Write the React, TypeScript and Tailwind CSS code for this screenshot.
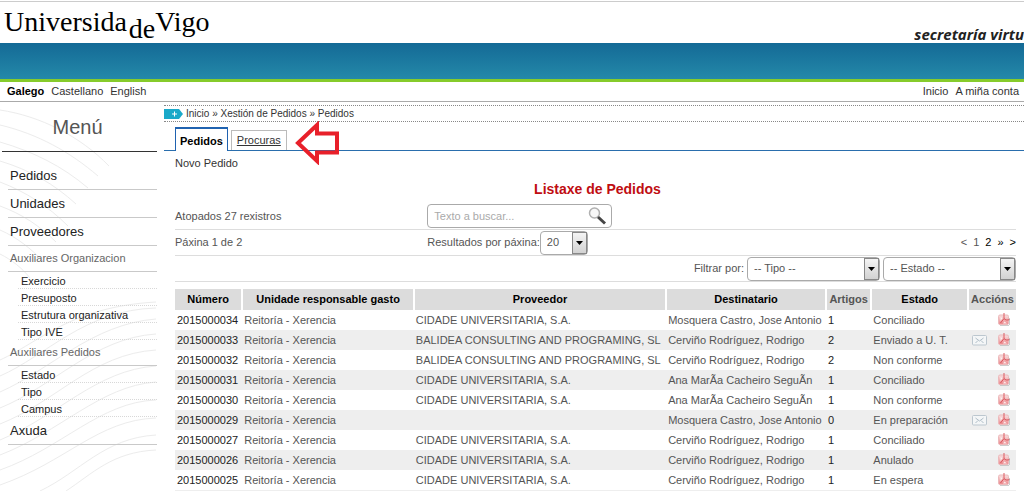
import type { ReactNode } from "react"
import { clsx } from "clsx"

type Pedido = {
  numero: string
  unidade: string
  proveedor: string
  destinatario: string
  artigos: number
  estado: string
  mail?: boolean
}

const CIDADE = "CIDADE UNIVERSITARIA, S.A."
const BALIDEA = "BALIDEA CONSULTING AND PROGRAMING, SL"
const XERENCIA = "Reitoría - Xerencia"

const pedidos: Pedido[] = [
  { numero: "2015000034", unidade: XERENCIA, proveedor: CIDADE, destinatario: "Mosquera Castro, Jose Antonio", artigos: 1, estado: "Conciliado" },
  { numero: "2015000033", unidade: XERENCIA, proveedor: BALIDEA, destinatario: "Cerviño Rodríguez, Rodrigo", artigos: 2, estado: "Enviado a U. T.", mail: true },
  { numero: "2015000032", unidade: XERENCIA, proveedor: BALIDEA, destinatario: "Cerviño Rodríguez, Rodrigo", artigos: 2, estado: "Non conforme" },
  { numero: "2015000031", unidade: XERENCIA, proveedor: CIDADE, destinatario: "Ana MarÃa Cacheiro SeguÃn", artigos: 1, estado: "Conciliado" },
  { numero: "2015000030", unidade: XERENCIA, proveedor: CIDADE, destinatario: "Ana MarÃa Cacheiro SeguÃn", artigos: 1, estado: "Non conforme" },
  { numero: "2015000029", unidade: XERENCIA, proveedor: "", destinatario: "Mosquera Castro, Jose Antonio", artigos: 0, estado: "En preparación", mail: true },
  { numero: "2015000027", unidade: XERENCIA, proveedor: CIDADE, destinatario: "Cerviño Rodríguez, Rodrigo", artigos: 1, estado: "Conciliado" },
  { numero: "2015000026", unidade: XERENCIA, proveedor: CIDADE, destinatario: "Cerviño Rodríguez, Rodrigo", artigos: 1, estado: "Anulado" },
  { numero: "2015000025", unidade: XERENCIA, proveedor: CIDADE, destinatario: "Cerviño Rodríguez, Rodrigo", artigos: 1, estado: "En espera" },
]

function PdfIcon() {
  return (
    <svg width="14" height="14" viewBox="0 0 14 14" aria-hidden="true">
      <defs>
        <linearGradient id="pdf" x1="0" y1="0" x2="0" y2="1">
          <stop offset="0" stopColor="#f8e2e2" />
          <stop offset="1" stopColor="#ec8589" />
        </linearGradient>
      </defs>
      <rect x="1.5" y="2" width="10" height="9.500" rx="1.500" fill="url(#pdf)" stroke="#ecb9bb" />
      <path d="M7 0v5.500" stroke="#dd5a60" />
      <path d="M7 5.500L3.500 10M7 5.500c1 1.500 3 2 6 1" fill="none" stroke="#d9525a" />
      <path d="M3.500 4l2 1-2 3zM7.500 8.500l2.500 2H6z" fill="#fff" opacity=".8" />
      <path d="M3 12.500h9M12.500 5v7" stroke="#b9b9b9" opacity=".7" />
    </svg>
  )
}

function MailIcon() {
  return (
    <svg width="15" height="11" viewBox="0 0 15 11" aria-hidden="true">
      <rect x=".5" y=".5" width="14" height="9.500" rx="1" fill="#f4f6f7" stroke="#bcc7cf" />
      <path d="M3.500 3l4 3 4-3M3.500 8l2.500-2.500M11.500 8L9 5.500" fill="none" stroke="#b0bec8" />
    </svg>
  )
}

/* Faint contour lines behind the menu */
function Waves() {
  return (
    <svg className="pointer-events-none absolute inset-0 h-full w-full" fill="none" stroke="#ececec" aria-hidden="true">
      <path d="M0 8C40 14 80 34 109 64M0 23C38 32 70 50 98 74M0 40C34 50 62 64 88 86M0 59C30 68 54 82 76 102M0 80C26 90 48 104 68 124M0 104C22 112 40 124 56 140M0 128C18 136 30 146 44 160M0 152C12 158 22 166 30 176" />
      <path d="M0 258C40 240 70 205 156 200M0 274C46 254 84 208 156 206M0 290C50 268 92 222 156 217M0 306C54 284 94 236 156 232M0 322C56 300 92 252 156 248M0 338C58 314 96 268 156 264M0 353C60 330 100 284 156 280M0 368C62 346 100 300 156 298M0 383C66 360 98 318 156 316M40 389C80 370 104 336 156 333M66 389C92 372 112 350 156 348" />
    </svg>
  )
}

function MenuItem({ children, className }: { children: ReactNode; className?: string }) {
  return (
    <li className={clsx("ml-1.5 h-7 border-b border-[#c9c9c9] pl-0.5 text-[13px] leading-7 text-[#222]", className)}>
      <a href="#">{children}</a>
    </li>
  )
}

function MenuGroup({ title, items }: { title: string; items: string[] }) {
  return (
    <li>
      <div className="ml-1.5 h-[26px] border-b border-[#c9c9c9] pl-0.5 text-[11px] leading-6 text-[#666]">{title}</div>
      <ul className="ml-4">
        {items.map((item) => (
          <li key={item} className="h-[17px] border-b border-dotted border-[#d8d8d8] pl-[3px] text-[11px] leading-[18px] text-[#222]">
            <a href="#">{item}</a>
          </li>
        ))}
      </ul>
    </li>
  )
}

function Sidebar() {
  return (
    <nav className="relative w-[157px] shrink-0 pl-0.5">
      <Waves />
      <div className="relative">
        <h2 className="h-[50px] border-b border-[#333] pr-1 text-center text-[20px] leading-[50px] text-[#555]">Menú</h2>
        <ul>
          <MenuItem className="mt-2.5">Pedidos</MenuItem>
          <MenuItem>Unidades</MenuItem>
          <MenuItem>Proveedores</MenuItem>
          <MenuGroup title="Auxiliares Organizacion" items={["Exercicio", "Presuposto", "Estrutura organizativa", "Tipo IVE"]} />
          <MenuGroup title="Auxiliares Pedidos" items={["Estado", "Tipo", "Campus"]} />
          <MenuItem>Axuda</MenuItem>
        </ul>
      </div>
    </nav>
  )
}

function Select({ id, label, options, className }: { id: string; label?: string; options: string[]; className: string }) {
  return (
    <span className={clsx("relative inline-flex h-6", className)}>
      <select id={id} aria-label={label} className="w-full appearance-none rounded border border-[#aaa] bg-white pl-1.5 text-[11px] text-[#555]">
        {options.map((option) => (
          <option key={option}>{option}</option>
        ))}
      </select>
      <span className="pointer-events-none absolute inset-y-px right-px flex w-[15px] items-center justify-center border border-[#888] bg-linear-to-b from-[#f4f4f4] to-[#d2d2d2]">
        <svg width="7" height="4" viewBox="0 0 7 4">
          <path d="M0 0h7L3.500 4z" fill="#000" />
        </svg>
      </span>
    </span>
  )
}

function Th({ children, muted }: { children: ReactNode; muted?: boolean }) {
  return (
    <th className={clsx("border-r-2 border-white p-0 text-center font-bold last:border-r-0", muted ? "text-[#555]" : "text-black")}>
      {children}
    </th>
  )
}

function PedidosTable() {
  return (
    <table className="mt-[7px] w-full table-fixed border-collapse text-[11px] text-[#555]">
      <colgroup>
        <col className="w-[8%]" />
        <col className="w-[20.4%]" />
        <col className="w-[30%]" />
        <col className="w-[19%]" />
        <col className="w-[5.4%]" />
        <col className="w-[11.5%]" />
        <col className="w-[5.7%]" />
      </colgroup>
      <thead>
        <tr className="h-[21px] bg-[#dcdcdc]">
          <Th>Número</Th>
          <Th>Unidade responsable gasto</Th>
          <Th>Proveedor</Th>
          <Th>Destinatario</Th>
          <Th muted>Artigos</Th>
          <Th>Estado</Th>
          <Th muted>Accións</Th>
        </tr>
      </thead>
      <tbody>
        {pedidos.map((p) => (
          <tr key={p.numero} className="h-5 whitespace-nowrap even:bg-[#eee]">
            <td className="p-0 pl-0.5 text-[#222]">
              <a href="#">{p.numero}</a>
            </td>
            <td className="p-0 pl-0.5">{p.unidade}</td>
            <td className="p-0 pl-0.5">{p.proveedor}</td>
            <td className="p-0 pl-0.5">{p.destinatario}</td>
            <td className="p-0 pl-0.5 text-[#222]">{p.artigos}</td>
            <td className="p-0 pl-0.5">{p.estado}</td>
            <td className="p-0">
              <div className="flex items-center justify-end gap-2.5 pr-[5px]">
                {p.mail && (
                  <button type="button" aria-label="Enviar correo">
                    <MailIcon />
                  </button>
                )}
                <button type="button" aria-label="Descargar PDF">
                  <PdfIcon />
                </button>
              </div>
            </td>
          </tr>
        ))}
      </tbody>
    </table>
  )
}

export default function App() {
  return (
    <div className="overflow-hidden bg-white font-['Liberation_Sans',Arial,sans-serif] text-[11px] text-[#333]">
      {/* Header */}
      <header>
        <div className="mt-px flex h-[42px] items-end justify-between border-t border-[#ccc]">
          <div className="flex items-start self-start pl-1 font-['Liberation_Serif',serif] text-[28px] leading-10 text-black">
            <span>Universida</span>
            <span className="pt-[7px] pl-0.5 leading-8 mt-1">de</span>
            <span>Vigo</span>
          </div>
          <div className="whitespace-nowrap font-['Open_Sans',sans-serif] text-[15px] leading-[18px] font-bold text-[#222] italic">secretaría virtu</div>
        </div>
        <div className="h-[39px] border-b-[3px] border-[#86cb2b] bg-linear-to-b from-[#146a96] to-[#2489a9]" />
        <div className="flex h-5 items-center justify-between border-b border-[#aaa] pr-[5px] pl-[7px]">
          <div className="flex gap-[7px]">
            <a href="#" className="font-bold text-black">Galego</a>
            <a href="#">Castellano</a>
            <a href="#">English</a>
          </div>
          <div className="flex gap-[7px]">
            <a href="#">Inicio</a>
            <a href="#">A miña conta</a>
          </div>
        </div>
      </header>

      <div className="flex">
        <Sidebar />

        <main className="ml-[7px] min-w-0 flex-1 pt-[3px]">
          {/* Breadcrumb */}
          <div className="flex h-[17px] items-center gap-[3px] border-y border-dotted border-[#888] text-[10px]">
            <svg width="19" height="10" viewBox="0 0 19 10" aria-hidden="true">
              <path d="M0 0h15l4 5-4 5H0z" fill="#1aa9c9" />
              <path d="M8 5h5M10.500 2.500v5" stroke="#fff" />
            </svg>
            <span>
              <a href="#">Inicio</a> » <a href="#">Xestión de Pedidos</a> » <a href="#">Pedidos</a>
            </span>
          </div>

          {/* Tabs */}
          <div className="relative mt-[5px] flex h-6 items-end gap-[3px] border-b border-[#2a6ead] pl-[11px]">
            <a href="#" className="-mb-px h-6 border-x border-t-2 border-[#1f62b0] bg-white px-1 leading-6 font-bold text-black">Pedidos</a>
            <a href="#" className="h-5 border-x border-t border-[#bbb] px-[5px] leading-[18px] underline">Procuras</a>
            <svg className="absolute -top-1.5 left-[131px]" width="46" height="44" viewBox="0 0 46 44" fill="none" aria-hidden="true">
              <path d="M3 22L22 4v8.500h20v19H22V40z" stroke="#e8202a" strokeWidth="4" />
            </svg>
          </div>

          <div className="pr-2 pl-[11px]">
            <a href="#" className="block leading-6">Novo Pedido</a>
            <h1 className="pl-1 text-center text-[14px] leading-7 font-bold text-[#c00d12]">Listaxe de Pedidos</h1>

            <div className="flex h-[27px] items-center border-b border-[#ddd] text-[#555]">
              <span className="w-[30%]">Atopados 27 rexistros</span>
              <form className="flex h-6 w-[185px] items-center rounded border border-[#aaa] pr-[3px]">
                <input type="text" aria-label="Texto a buscar" placeholder="Texto a buscar..." className="min-w-0 flex-1 pl-1.5 text-[11px] placeholder:text-[#aaa] focus:outline-none" />
                <button type="button" aria-label="Buscar">
                  <svg width="20" height="20" viewBox="0 0 20 20" fill="none">
                    <circle cx="6.500" cy="7" r="5" fill="#f8f8f8" stroke="#b0b0b0" strokeWidth="1.500" />
                    <path d="M10 11l7 6.500" stroke="#444" strokeWidth="3" />
                  </svg>
                </button>
              </form>
            </div>

            <div className="flex h-[26px] items-center border-b border-[#ddd] text-[#555]">
              <span className="w-[30%]">Páxina 1 de 2</span>
              <label htmlFor="resultados">Resultados por páxina:</label>
              <Select id="resultados" options={["20", "50", "100"]} className="w-12" />
              <div className="ml-auto flex gap-1.5">
                <span>&lt;</span>
                <span>1</span>
                <a href="#" className="text-black">2</a>
                <a href="#" className="text-black">»</a>
                <a href="#" className="text-black">&gt;</a>
              </div>
            </div>

            <div className="flex h-[26px] items-center justify-end gap-[3px] border-b border-[#ddd] text-[#555]">
              <label htmlFor="tipo">Filtrar por:</label>
              <Select id="tipo" options={["-- Tipo --"]} className="w-[133px]" />
              <Select id="estado" label="Estado" options={["-- Estado --"]} className="w-[133px]" />
            </div>

            <PedidosTable />
            <div className="h-px bg-[#eee]" />
          </div>
        </main>
      </div>
    </div>
  )
}
